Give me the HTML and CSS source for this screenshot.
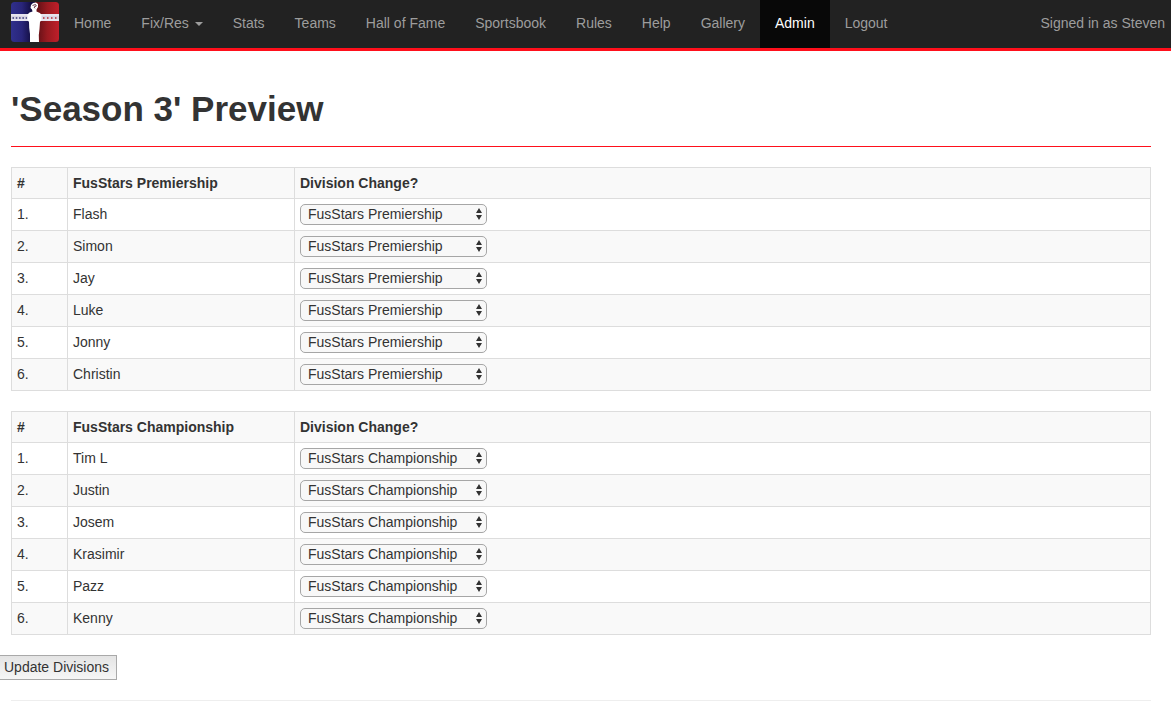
FILE: index.html
```html
<!DOCTYPE html>
<html lang="en">
<head>
<meta charset="utf-8">
<title>'Season 3' Preview</title>
<meta name="viewport" content="width=device-width, initial-scale=1">
<link rel="stylesheet" href="styles.css">
</head>
<body>
<nav class="navbar">
  <a class="brand" href="#" aria-label="FusStars">
    <svg width="48" height="40" viewBox="0 0 48 40" aria-hidden="true">
      <defs>
        <linearGradient id="blue"><stop offset="0" stop-color="#30308c"/><stop offset=".45" stop-color="#29257a"/><stop offset=".85" stop-color="#130e42"/></linearGradient>
        <linearGradient id="red"><stop offset=".15" stop-color="#6a1218"/><stop offset=".5" stop-color="#981a20"/><stop offset="1" stop-color="#c01f2a"/></linearGradient>
        <clipPath id="badge"><rect width="48" height="40" rx="3.5"/></clipPath>
      </defs>
      <g clip-path="url(#badge)">
        <rect width="24" height="40" fill="url(#blue)"/>
        <rect x="24" width="24" height="40" fill="url(#red)"/>
        <rect y="12" width="48" height="7" fill="#d9d5e3"/>
        <path d="M0 13h48M0 18h48" stroke="#f4f2f8" stroke-width="1"/>
        <path d="M1.500 16H16" stroke="#373779" stroke-width="1.500" stroke-dasharray="1.500 1.800"/>
        <path d="M32 16H47" stroke="#b62935" stroke-width="1.500" stroke-dasharray="1.500 2.500"/>
        <path d="M20 3 22 1 25 .5 27 2 27 5 25.500 7.500 25.500 9.500 29 11 30.500 13 30.500 18 29 20 28.500 27 27.800 33 28 40 19 40 19 32 18.200 26 18 20 16.500 18 16.500 12.500 18.500 10.500 21.500 9.500 21 7.500 19.500 6z" fill="#fff"/>
        <path d="M21.500 3.500 24.500 2.500 25.300 4 23 5 24 6.300" fill="none" stroke="#6d4453" stroke-width="1"/>
      </g>
    </svg>
  </a>
  <ul class="nav-list">
    <li><a href="#">Home</a></li>
    <li><a href="#">Fix/Res <span class="caret"></span></a></li>
    <li><a href="#">Stats</a></li>
    <li><a href="#">Teams</a></li>
    <li><a href="#">Hall of Fame</a></li>
    <li><a href="#">Sportsbook</a></li>
    <li><a href="#">Rules</a></li>
    <li><a href="#">Help</a></li>
    <li><a href="#">Gallery</a></li>
    <li><a class="active" href="#" aria-current="page">Admin</a></li>
    <li><a href="#">Logout</a></li>
  </ul>
  <p class="signed-in">Signed in as Steven</p>
</nav>
<main class="content">
  <h1 class="page-title">'Season 3' Preview</h1>
  <form>
    <table class="division">
      <thead><tr><th class="rank">#</th><th class="player">FusStars Premiership</th><th>Division Change?</th></tr></thead>
      <tbody>
        <tr><td>1.</td><td>Flash</td><td><select aria-label="Division for Flash"><option selected>FusStars Premiership</option><option>FusStars Championship</option></select></td></tr>
        <tr><td>2.</td><td>Simon</td><td><select aria-label="Division for Simon"><option selected>FusStars Premiership</option><option>FusStars Championship</option></select></td></tr>
        <tr><td>3.</td><td>Jay</td><td><select aria-label="Division for Jay"><option selected>FusStars Premiership</option><option>FusStars Championship</option></select></td></tr>
        <tr><td>4.</td><td>Luke</td><td><select aria-label="Division for Luke"><option selected>FusStars Premiership</option><option>FusStars Championship</option></select></td></tr>
        <tr><td>5.</td><td>Jonny</td><td><select aria-label="Division for Jonny"><option selected>FusStars Premiership</option><option>FusStars Championship</option></select></td></tr>
        <tr><td>6.</td><td>Christin</td><td><select aria-label="Division for Christin"><option selected>FusStars Premiership</option><option>FusStars Championship</option></select></td></tr>
      </tbody>
    </table>
    <table class="division">
      <thead><tr><th class="rank">#</th><th class="player">FusStars Championship</th><th>Division Change?</th></tr></thead>
      <tbody>
        <tr><td>1.</td><td>Tim L</td><td><select aria-label="Division for Tim L"><option>FusStars Premiership</option><option selected>FusStars Championship</option></select></td></tr>
        <tr><td>2.</td><td>Justin</td><td><select aria-label="Division for Justin"><option>FusStars Premiership</option><option selected>FusStars Championship</option></select></td></tr>
        <tr><td>3.</td><td>Josem</td><td><select aria-label="Division for Josem"><option>FusStars Premiership</option><option selected>FusStars Championship</option></select></td></tr>
        <tr><td>4.</td><td>Krasimir</td><td><select aria-label="Division for Krasimir"><option>FusStars Premiership</option><option selected>FusStars Championship</option></select></td></tr>
        <tr><td>5.</td><td>Pazz</td><td><select aria-label="Division for Pazz"><option>FusStars Premiership</option><option selected>FusStars Championship</option></select></td></tr>
        <tr><td>6.</td><td>Kenny</td><td><select aria-label="Division for Kenny"><option>FusStars Premiership</option><option selected>FusStars Championship</option></select></td></tr>
      </tbody>
    </table>
    <div class="actions"><button class="update" type="submit">Update Divisions</button></div>
  </form>
  <hr class="divider">
</main>
</body>
</html>
```
FILE: styles.css
```css
* { box-sizing: border-box; }

body {
  margin: 0;
  background: #fff;
  color: #333;
  font: 14px/20px "Liberation Sans", Arial, sans-serif;
}

.navbar {
  display: flex;
  align-items: stretch;
  padding: 0 6px 0 11px;
  background: #222;
  border-bottom: 3px solid #ff0f1b;
  color: #9d9d9d;
}

.brand {
  display: block;
  padding-top: 2px;
}

.brand svg { display: block; }

.nav-list {
  display: flex;
  margin: 0;
  padding: 0;
  list-style: none;
}

.nav-list a {
  display: block;
  padding: 13px 15px 15px;
  color: #9d9d9d;
  text-decoration: none;
  white-space: nowrap;
}

.nav-list a.active {
  background: #080808;
  color: #fff;
}

.caret {
  display: inline-block;
  margin-left: 2px;
  vertical-align: middle;
  border: 4px solid transparent;
  border-top-color: currentColor;
  border-bottom: 0;
}

.signed-in {
  margin: 0 0 0 auto;
  padding: 13px 0 15px;
  white-space: nowrap;
}

.content { padding: 38px 20px 0 11px; }

.page-title {
  margin: 0 0 20px;
  padding-bottom: 17px;
  border-bottom: 1px solid #ff0f1b;
  font-size: 35px;
  font-weight: 700;
  line-height: 40px;
}

.division {
  width: 100%;
  margin-bottom: 20px;
  border-collapse: collapse;
  table-layout: fixed;
}

.division th,
.division td {
  padding: 5px;
  border: 1px solid #ddd;
  text-align: left;
  vertical-align: top;
}

.division th { background: #f9f9f9; }
.division tbody tr:nth-child(even) { background: #f9f9f9; }
.division .rank { width: 56px; }
.division .player { width: 227px; }

.division select {
  display: block;
  appearance: none;
  width: 187px;
  height: 21px;
  margin: 0;
  padding: 0 20px 0 7px;
  border: 1px solid #a6a6a6;
  border-radius: 5px;
  background: #f8f8f8 url("data:image/svg+xml,%3Csvg xmlns='http://www.w3.org/2000/svg' width='6' height='13'%3E%3Cpath d='M0 5l3-5 3 5zM0 7l3 5 3-5z' fill='%23333'/%3E%3C/svg%3E") no-repeat right 4px center;
  color: #333;
  font: inherit;
  line-height: 19px;
}

.actions { margin-left: -15px; }

.update {
  display: block;
  height: 25px;
  padding: 0 7px 2px;
  border: 1px solid #a9a9a9;
  border-radius: 0;
  background: linear-gradient(#e4e4e4, #f6f6f6);
  color: #333;
  font: inherit;
}

.divider {
  margin: 20px 0;
  border: 0;
  border-top: 1px solid #eee;
}
```
